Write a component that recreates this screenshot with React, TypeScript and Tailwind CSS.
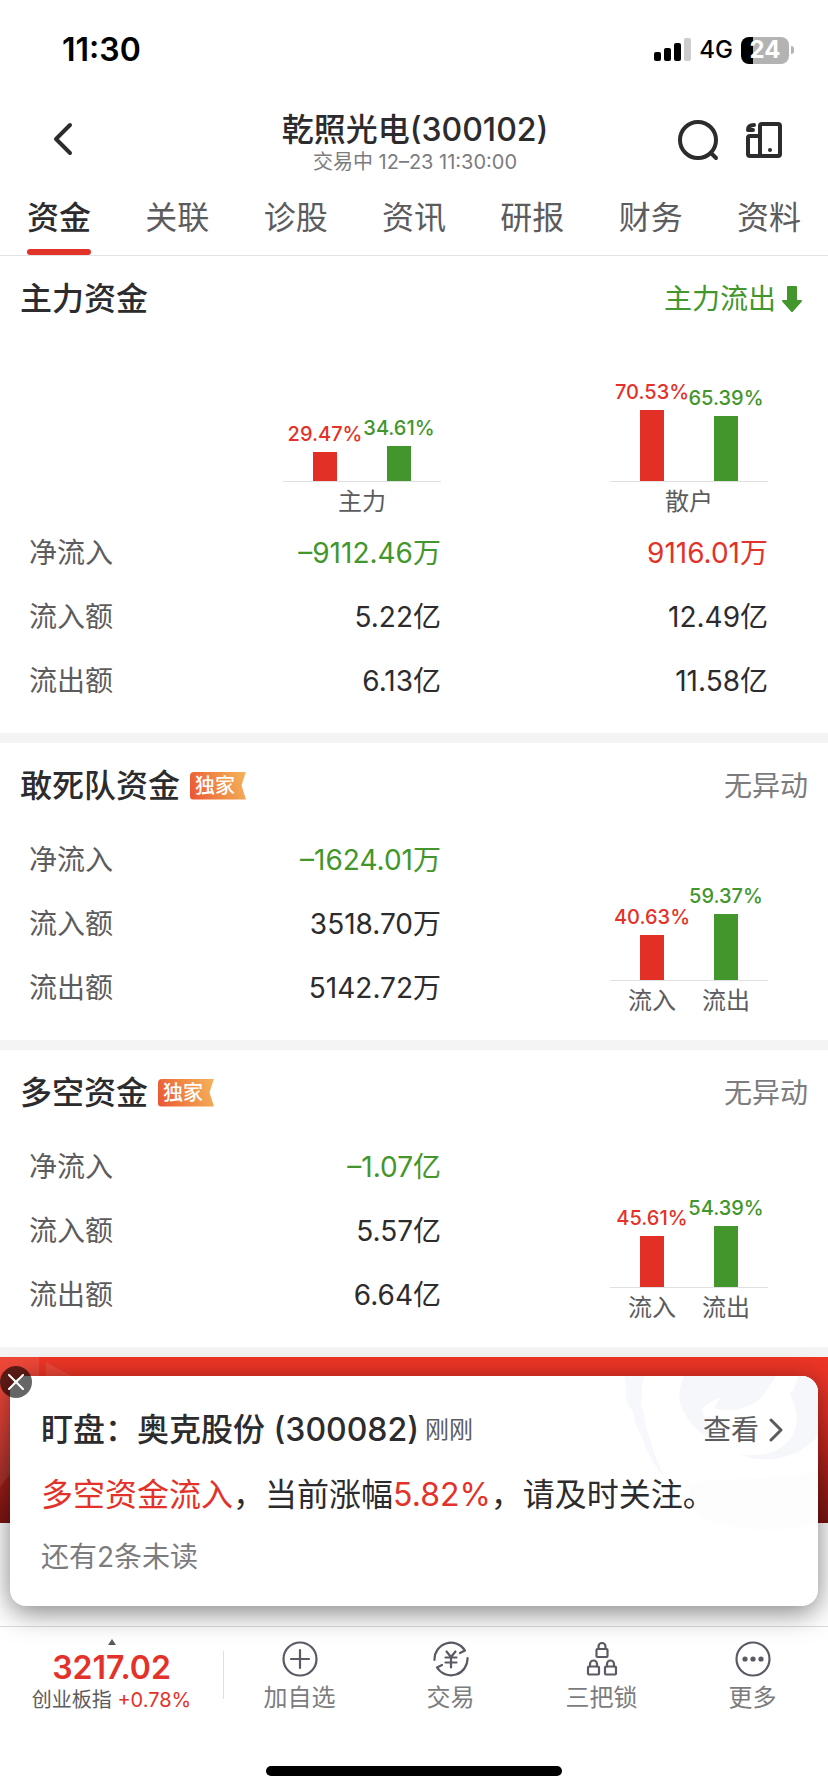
import React, { useState } from 'react';

type Bar = { value: number; color: 'red' | 'green'; label?: string };

type Row = { label: string; values: { text: string; tone?: 'red' | 'green' }[] };

const tabs = ['资金', '关联', '诊股', '资讯', '研报', '财务', '资料'];

const mainRows: Row[] = [
  { label: '净流入', values: [{ text: '–9112.46万', tone: 'green' }, { text: '9116.01万', tone: 'red' }] },
  { label: '流入额', values: [{ text: '5.22亿' }, { text: '12.49亿' }] },
  { label: '流出额', values: [{ text: '6.13亿' }, { text: '11.58亿' }] },
];

const squadRows: Row[] = [
  { label: '净流入', values: [{ text: '–1624.01万', tone: 'green' }] },
  { label: '流入额', values: [{ text: '3518.70万' }] },
  { label: '流出额', values: [{ text: '5142.72万' }] },
];

const longShortRows: Row[] = [
  { label: '净流入', values: [{ text: '–1.07亿', tone: 'green' }] },
  { label: '流入额', values: [{ text: '5.57亿' }] },
  { label: '流出额', values: [{ text: '6.64亿' }] },
];

const toneClass = {
  red: 'text-[#e33229]',
  green: 'text-[#43962b]',
};

const StatusBar = () => (
  <div className="flex h-[100px] items-center justify-between pl-[62px] pr-[34px] text-black">
    <span className="text-[32px] font-semibold leading-10">11:30</span>
    <div className="flex items-center gap-2">
      <svg width="37" height="24" viewBox="0 0 37 24">
        <rect x="0" y="14" width="7" height="9" rx="2" />
        <rect x="10" y="10" width="7" height="13" rx="2" />
        <rect x="20" y="5" width="7" height="18" rx="2" />
        <rect x="30" y="0" width="7" height="23" rx="2" fill="#cccccc" />
      </svg>
      <span className="text-[24px] font-medium leading-8">4G</span>
      <div className="flex items-center gap-0.5">
        <div className="flex h-[27px] w-12 items-center justify-center rounded-lg bg-[linear-gradient(90deg,#000_25%,#b3b3b3_25%)] text-[24px] font-bold leading-6 text-white">
          24
        </div>
        <span className="h-2 w-[3px] rounded-r-full bg-[#b3b3b3]" />
      </div>
    </div>
  </div>
);

const Header = () => (
  <header className="grid h-[84px] grid-cols-[1fr_auto_1fr] pl-[46px] pr-[44px]">
    <button aria-label="返回" className="mt-[19px] h-10 w-9">
      <svg width="36" height="40" viewBox="0 0 36 40" fill="none" stroke="#2c2c2e" strokeWidth="4" strokeLinecap="round" strokeLinejoin="round">
        <path d="M24 6 10 20l14 14" />
      </svg>
    </button>
    <div className="pt-2.5 text-center">
      <h1 className="text-[32px] font-medium leading-10 text-[#2c2c2e]">乾照光电(300102)</h1>
      <p className="text-[20px] leading-6 text-[#7c7c7e]">交易中 12–23 11:30:00</p>
    </div>
    <div className="mt-[18px] flex items-start justify-end gap-6">
      <button aria-label="搜索">
        <svg width="44" height="44" viewBox="0 0 44 44" fill="none" stroke="#2c2c2e" strokeWidth="4" strokeLinecap="round">
          <circle cx="22" cy="22" r="18" />
          <path d="m35 35 5 5" />
        </svg>
      </button>
      <button aria-label="切换布局">
        <svg width="40" height="44" viewBox="0 0 40 44" fill="none" stroke="#2c2c2e" strokeWidth="4" strokeLinecap="round" strokeLinejoin="round">
          <rect x="16" y="6" width="20" height="32" rx="2" />
          <path d="M16 18H6a2 2 0 0 0-2 2v16a2 2 0 0 0 2 2h10" />
          <path d="M4 12c0-3 2-5 6-5M4 12l5 0" />
          <circle cx="26" cy="32" r="2" fill="#2c2c2e" stroke="none" />
        </svg>
      </button>
    </div>
  </header>
);

const Tag = () => (
  <span className="flex h-7 w-14 items-center rounded-l bg-[linear-gradient(70deg,#ea5433,#f08a45_50%,#f4b45c)] pl-[5px] text-[20px] font-medium leading-7 text-white [clip-path:polygon(0_0,100%_0,92%_50%,100%_100%,0_100%)]">
    独家
  </span>
);

const BarChart = ({ bars, caption, scale = 1 }: { bars: Bar[]; caption?: string; scale?: number }) => (
  <div className="w-[158px] text-[24px] font-normal text-[#5c5c5e]">
    <div className="flex items-end justify-center border-b border-[#e0e0e2]">
      {bars.map((bar) => (
        <div key={bar.color} className="flex w-[74px] flex-col items-center">
          <span className={`text-[20px] font-medium leading-9 ${toneClass[bar.color]}`}>{bar.value.toFixed(2)}%</span>
          <span
            className={`w-6 ${bar.color === 'red' ? 'bg-[#e23027]' : 'bg-[#43962b]'}`}
            style={{ height: Math.round(bar.value * scale) }}
          />
        </div>
      ))}
    </div>
    <div className="flex h-[39px] items-center justify-center leading-[39px]">
      {caption
        ? caption
        : bars.map((bar) => (
            <span key={bar.color} className="w-[74px] text-center">
              {bar.label}
            </span>
          ))}
    </div>
  </div>
);

const FundTable = ({ rows, head, chart }: { rows: Row[]; head?: React.ReactNode[]; chart?: React.ReactNode }) => (
  <div className="pl-[29px] pr-[60px]">
    <table className="w-full table-fixed text-[28px] leading-10">
      <colgroup>
        <col className="w-[85px]" />
        <col />
        <col />
      </colgroup>
      {head && (
        <thead>
          <tr className="h-[180px]">
            <td />
            {head.map((cell, i) => (
              <th key={i} className="p-0 align-bottom">
                <div className="flex justify-end">{cell}</div>
              </th>
            ))}
          </tr>
        </thead>
      )}
      <tbody>
        {rows.map((row, i) => (
          <tr key={row.label} className="h-16">
            <th className="whitespace-nowrap p-0 text-left font-normal text-[#5c5c5e]">{row.label}</th>
            {row.values.map((value) => (
              <td key={value.text} className={`p-0 text-right ${value.tone ? toneClass[value.tone] : 'text-[#2c2c2e]'}`}>
                {value.text}
              </td>
            ))}
            {chart && i === 0 && (
              <td rowSpan={rows.length} className="p-0 align-bottom">
                <div className="flex justify-end">{chart}</div>
              </td>
            )}
          </tr>
        ))}
      </tbody>
    </table>
  </div>
);

const Section = ({ title, tag, status, children }: { title: string; tag?: boolean; status: React.ReactNode; children: React.ReactNode }) => (
  <section className="border-b-10 border-[#f4f4f4] pb-5">
    <div className="flex h-[85px] items-center justify-between px-5">
      <div className="flex items-center gap-2.5">
        <h2 className="text-[32px] font-medium leading-10 text-[#2c2c2e]">{title}</h2>
        {tag && <Tag />}
      </div>
      {status}
    </div>
    {children}
  </section>
);

const NoChange = () => <span className="text-[28px] leading-10 text-[#7c7c7e]">无异动</span>;

const Alert = ({ onClose }: { onClose: () => void }) => (
  <div className="absolute inset-x-2.5 bottom-full mb-5 h-[230px] rounded-2xl bg-white shadow-[0_6px_28px_rgba(0,0,0,0.5)]">
    <svg className="absolute right-0 top-0 rounded-tr-2xl" width="200" height="160" viewBox="0 0 200 160">
      <path d="M6 0h21c-5 10-2 18-4 28 5 14 3 22 9 34 2 12 8 24 14 38-12-12-18-26-22-40-8-10-6-16-10-26C5 26 10 14 6 0Z" fill="#f7f8fb" />
      <path d="M66 0h92c-10 16-14 24-28 30-14 6-28 4-34 2l6-10c-8 2-14 8-18 10 0 10 10 20 15 32 2 4-6 0-8-2-18-10-24-24-29-34-2-10 0-18 4-28Z" fill="#f6f7fa" />
      <path d="M180 0h20v60c-20 22-50 30-80 18 24 4 44-2 54-18 10-18 2-32-2-42 4-4 6-10 8-18Z" fill="#f6f7fa" />
      <path d="M70 108c40-10 80 0 130-14v54c-50 10-100 8-124-14Z" fill="#fdfdfd" />
    </svg>
    <button
      aria-label="关闭"
      onClick={onClose}
      className="absolute -left-2.5 -top-2.5 flex h-8 w-8 items-center justify-center rounded-full bg-black/60"
    >
      <svg width="16" height="16" viewBox="0 0 16 16" stroke="white" strokeWidth="2" strokeLinecap="round">
        <path d="m1 1 14 14M15 1 1 15" />
      </svg>
    </button>
    <div className="relative flex h-full flex-col px-[31px] pt-[29px] text-[#2c2c2e]">
      <div className="flex h-[50px] items-center justify-between">
        <p className="flex items-center gap-1.5 text-[32px] font-medium leading-10">
          盯盘：奥克股份 (300082)
          <span className="text-[24px] font-normal text-[#5c5c5e]">刚刚</span>
        </p>
        <a href="#" className="flex items-center gap-2 text-[28px] leading-10 text-[#5c5c5e]">
          查看
          <svg width="20" height="24" viewBox="0 0 20 24" fill="none" stroke="#5c5c5e" strokeWidth="3" strokeLinecap="round" strokeLinejoin="round">
            <path d="m4 2 10 10L4 22" />
          </svg>
        </a>
      </div>
      <p className="mt-5 text-[32px] leading-10">
        <span className="text-[#e33229]">多空资金流入</span>，当前涨幅<span className="text-[#e33229]">5.82%</span>，请及时关注。
      </p>
      <p className="mt-[22px] text-[28px] leading-10 text-[#7c7c7e]">还有2条未读</p>
    </div>
  </div>
);

const Lock = ({ x, y }: { x: number; y: number }) => (
  <g transform={`translate(${x} ${y})`}>
    <rect x="1" y="7" width="11" height="8" rx="1" />
    <path d="M3 7V4.500a3.500 3.500 0 0 1 7 0V7" />
  </g>
);

const actions = [
  {
    label: '加自选',
    icon: (
      <>
        <circle cx="18" cy="18" r="16.500" />
        <path d="M18 9v18M9 18h18" />
      </>
    ),
  },
  {
    label: '交易',
    icon: (
      <>
        <path d="M1.500 19A16.500 16.500 0 0 1 32 9.500l-5 2.500" />
        <path d="M34.500 17A16.500 16.500 0 0 1 4 26.500l5-2.500" />
        <path d="m13.500 10.500 4.500 5.500 4.500-5.500M18 16v10.500M12.500 16.500h11M12.500 21.500h11" />
      </>
    ),
  },
  {
    label: '三把锁',
    icon: (
      <>
        <Lock x={11.5} y={1} />
        <Lock x={3} y={18.5} />
        <Lock x={20} y={18.5} />
      </>
    ),
  },
  {
    label: '更多',
    icon: (
      <>
        <circle cx="18" cy="18" r="16.500" />
        <g fill="#5a5a64" stroke="none">
          <circle cx="10" cy="18" r="2.600" />
          <circle cx="18" cy="18" r="2.600" />
          <circle cx="26" cy="18" r="2.600" />
        </g>
      </>
    ),
  },
];

const BottomBar = () => (
  <nav className="border-t border-[#dcdce4] bg-white">
    <div className="flex h-[100px]">
      <div className="flex w-[223px] flex-col items-center pt-3">
        <svg width="8" height="6" viewBox="0 0 8 6">
          <path d="M4 0 8 6H0Z" fill="#5c5c5e" />
        </svg>
        <span className="mt-[5px] text-[32px] font-semibold leading-9 text-[#e33229]">3217.02</span>
        <span className="text-[20px] leading-7 text-[#5c5c5e]">
          创业板指 <span className="text-[#e33229]">+0.78%</span>
        </span>
      </div>
      <span className="mt-6 h-12 w-px bg-[#e0e0e4]" />
      {actions.map((action) => (
        <button key={action.label} className="flex flex-1 flex-col items-center pt-3.5 text-[24px] leading-[42px] text-[#7c7c7e]">
          <svg width="36" height="36" viewBox="0 0 36 36" fill="none" stroke="#5a5a64" strokeWidth="2.200" strokeLinecap="round" strokeLinejoin="round">
            {action.icon}
          </svg>
          {action.label}
        </button>
      ))}
    </div>
    <div className="flex h-[65px] items-end justify-center pb-4">
      <span className="h-2.5 w-[296px] rounded-full bg-black" />
    </div>
  </nav>
);

const App = () => {
  const [active, setActive] = useState('资金');
  const [alertOpen, setAlertOpen] = useState(true);

  return (
    <div className="flex min-h-screen flex-col overflow-hidden bg-white font-[Inter,'Noto_Sans_CJK_SC',sans-serif]">
      <StatusBar />
      <Header />
      <div className="flex justify-between border-b border-[#e4e4e6] px-[27px]">
        {tabs.map((tab) => (
          <button
            key={tab}
            onClick={() => setActive(tab)}
            className={`flex h-[71px] flex-col items-center justify-between pt-3.5 text-[32px] leading-10 ${
              tab === active ? 'font-medium text-[#2c2c2e]' : 'text-[#5c5c5e]'
            }`}
          >
            {tab}
            <span className={`h-1.5 w-full rounded-[3px] ${tab === active ? 'bg-[#e33229]' : ''}`} />
          </button>
        ))}
      </div>

      <main className="flex-1">
        <Section
          title="主力资金"
          status={
            <span className="flex items-center gap-1.5 pr-1.5 text-[28px] leading-10 text-[#43962b]">
              主力流出
              <svg width="20" height="26" viewBox="0 0 20 26" fill="#43962b">
                <path d="M6 0h8a1 1 0 0 1 1 1v13h4c1 0 1.300 1 .6 1.800L11 25.400a1.300 1.300 0 0 1-2 0L.4 15.800C-.3 15 0 14 1 14h4V1a1 1 0 0 1 1-1Z" />
              </svg>
            </span>
          }
        >
          <FundTable
            rows={mainRows}
            head={[
              <BarChart bars={[{ value: 29.47, color: 'red' }, { value: 34.61, color: 'green' }]} caption="主力" />,
              <BarChart bars={[{ value: 70.53, color: 'red' }, { value: 65.39, color: 'green' }]} caption="散户" />,
            ]}
          />
        </Section>

        <Section title="敢死队资金" tag status={<NoChange />}>
          <FundTable
            rows={squadRows}
            chart={<BarChart scale={1.115} bars={[{ value: 40.63, color: 'red', label: '流入' }, { value: 59.37, color: 'green', label: '流出' }]} />}
          />
        </Section>

        <Section title="多空资金" tag status={<NoChange />}>
          <FundTable
            rows={longShortRows}
            chart={<BarChart scale={1.115} bars={[{ value: 45.61, color: 'red', label: '流入' }, { value: 54.39, color: 'green', label: '流出' }]} />}
          />
        </Section>

        {/* promo banner, mostly hidden by the alert */}
        <div className="h-[166px] bg-[linear-gradient(180deg,#ee3626_0%,#e33125_35%,#a82019_70%,#7c1513_100%)]">
          <svg width="100" height="166" viewBox="0 0 100 166">
            <path d="M0 0h39v80L0 130Z" fill="#fff" opacity="0.09" />
            <path d="m46 5 40 22H46Z" fill="#fff" opacity="0.09" />
          </svg>
        </div>
      </main>

      <div className="relative">
        <BottomBar />
        {alertOpen && <Alert onClose={() => setAlertOpen(false)} />}
      </div>
    </div>
  );
};

export default App;
